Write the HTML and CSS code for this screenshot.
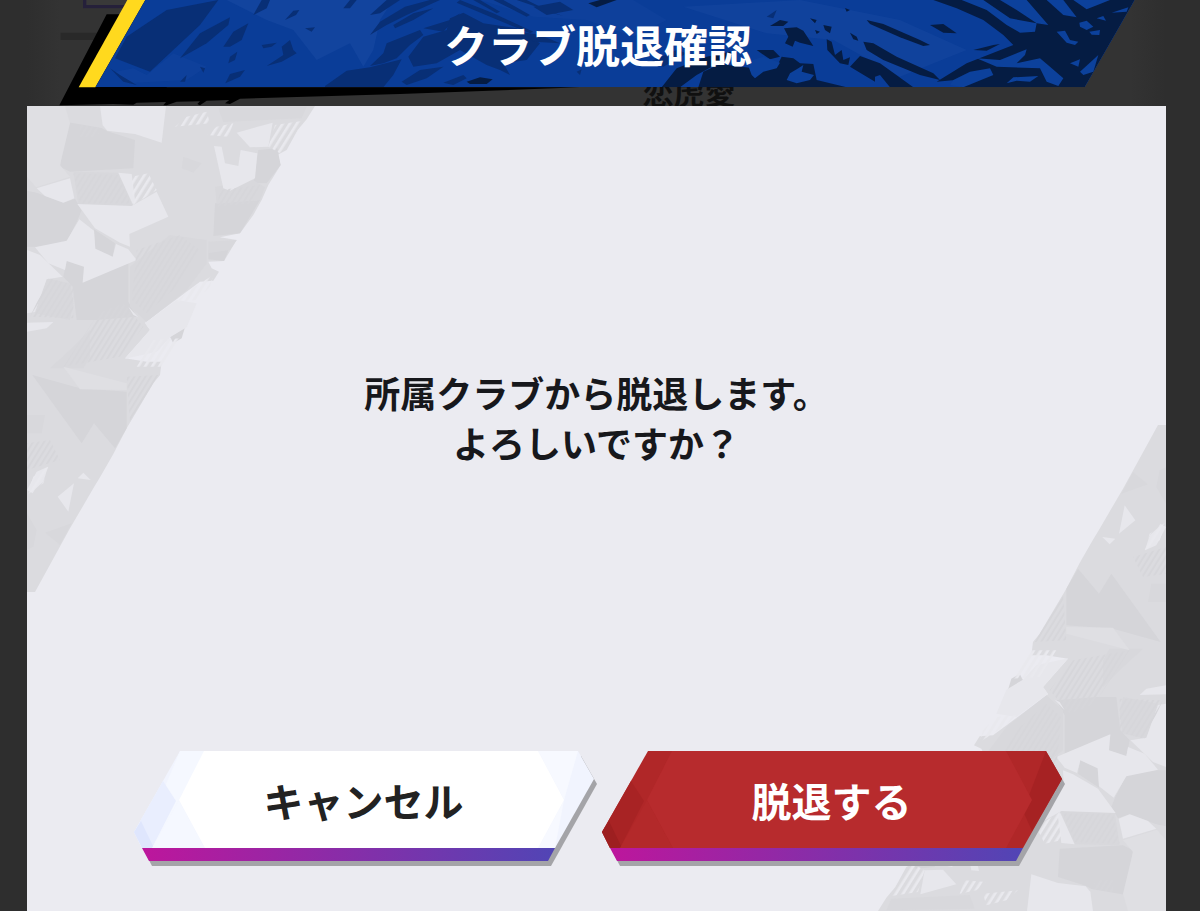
FILE: index.html
```html
<!DOCTYPE html>
<html lang="ja">
<head>
    <meta charset="UTF-8">
    <meta name="viewport" content="width=device-width, initial-scale=1.0">
    <title>クラブ脱退確認</title>
    <link rel="stylesheet" href="styles.css">
</head>
<body>
    <!-- Shared shapes -->
    <svg class="defs" aria-hidden="true">
        <defs>
            <linearGradient id="stripe" x1="0" x2="1" y1="0" y2="0">
                <stop offset="0" stop-color="#bd169c"/>
                <stop offset="1" stop-color="#5145b5"/>
            </linearGradient>
            <pattern id="scratch" width="18" height="40" patternUnits="userSpaceOnUse" patternTransform="rotate(32)">
                <rect width="8" height="40" fill="#e9e9ee"/>
            </pattern>
            <pattern id="scratch-dark" width="14" height="40" patternUnits="userSpaceOnUse" patternTransform="rotate(32)">
                <rect width="6" height="40" fill="#d6d6da"/>
            </pattern>
        </defs>
        <symbol id="shards" viewBox="21 18 870 1461">
            <path fill="#dbdbdf" d="M21 18H885L860 58 833 90 800 150 772 165 782 195 745 255 725 300 700 345 660 400 600 412 650 420 612 483 565 485 575 505 597 515 580 542 540 545 375 668 390 690 315 775 380 785H425L420 825 400 850 320 985 280 1062 240 1132 220 1165 150 1285 45 1476H21Z"/>
            <g fill="#d5d5d9">
                <path d="M140 66 245 84 262 94 345 120 340 205 150 215 120 200Z"/>
                <path d="M21 272 50 278 130 308 165 296 185 330 172 362 140 425 50 440H21Z"/>
                <path d="M222 388 285 430 278 472 226 446Z"/>
                <path d="M140 482 195 500 188 546 325 490 325 605 350 650 230 660H170L158 560 130 530Z"/>
                <path d="M585 310 720 300 660 400 580 408Z"/>
                <path d="M715 150 772 145 782 195 740 250 700 250Z"/>
                <path d="M565 450 630 440 612 483 565 478Z"/>
                <path d="M37 825 180 865 320 875 320 985 285 1045 222 970 185 1030Z"/>
                <path d="M450 710 495 682 485 715 460 730Z"/>
            </g>
            <g fill="#d8d8dc">
                <path d="M160 215 298 218 338 318 175 315Z"/>
                <path d="M450 405 560 420 560 490 500 570 380 665 330 620 330 500Z"/>
                <path d="M565 425 650 420 630 450 565 460Z"/>
                <path d="M80 535 150 550 160 610 150 660 45 640Z"/>
                <path d="M595 25 860 20 845 55 610 66Z"/>
                <path d="M490 170 545 190 520 218 485 205Z"/>
                <path d="M21 945H75L65 1000H21Z"/>
                <path d="M75 1298 155 1270 120 1335Z"/>
                <path d="M21 1240 50 1290 40 1340 21 1350Z"/>
                <path d="M150 750 210 690 210 770 190 805 90 805Z"/>
                <path d="M585 260 700 240 735 262 720 300 590 312Z"/>
            </g>
            <g fill="#dfdfe3">
                <path d="M21 18H135L150 70 120 195 150 230 48 262 21 230Z"/>
                <path d="M130 800 320 850 320 870 180 868Z"/>
            </g>
            <g fill="#e7e7ec">
                <path d="M240 18H438L425 128 345 102 262 92 248 76Z"/>
                <path d="M50 265 150 235 163 295 130 308 75 288Z"/>
                <path d="M295 218 335 222 345 300 338 312Z"/>
                <path d="M172 312 335 318 410 275 445 350 328 402 330 440 300 428 225 385Z"/>
                <path d="M45 442 140 422 178 358 222 392 226 446 278 470 288 432 325 448 350 480 188 548 192 500 140 483 135 510 85 490Z"/>
                <path d="M21 450 60 465 128 530 80 538 45 636 21 640Z"/>
                <path d="M582 138 605 140 615 190 655 198 662 150 712 160 705 235 630 272 610 265Z"/>
                <path d="M650 98 758 68 745 140 690 142Z"/>
                <path d="M325 620 355 652 340 645Z"/>
                <path d="M21 668 100 666 80 685 21 695Z"/>
                <path d="M375 670 470 600 530 610 500 682 450 712 410 755 315 776 390 690Z"/>
                <path d="M173 1135 190 1118 212 1140Z"/>
                <path d="M113 1190 162 1150 145 1235Z"/>
                <path d="M50 1115 84 1100 70 1145 45 1168 38 1180 21 1170Z"/>
            </g>
            <g fill="url(#scratch)">
                <path d="M335 230 385 220 410 270 340 315Z"/>
                <path d="M500 50 560 35 570 70 465 80Z"/>
                <path d="M590 80 640 70 625 110 560 105Z"/>
                <path d="M765 75 850 62 830 100 780 160 745 140Z"/>
                <path d="M500 575 580 525 570 560 530 600 470 605Z"/>
                <path d="M400 720 480 715 425 800 350 800Z"/>
                <path d="M40 1130 85 1100 70 1150 21 1185Z"/>
            </g>
            <g fill="url(#scratch-dark)">
                <path d="M160 220 295 225 330 310 180 310Z"/>
                <path d="M180 75 245 85 230 110 180 110Z"/>
                <path d="M350 450 480 405 540 450 470 560 380 640 335 600Z"/>
                <path d="M85 535 160 555 160 655 30 650Z"/>
                <path d="M235 640 310 610 370 680 300 770 130 800Z"/>
                <path d="M600 270 720 255 700 310 590 320Z"/>
                <path d="M320 830 415 825 330 970Z"/>
                <path d="M21 1030 90 1020 120 1080 21 1110Z"/>
            </g>
        </symbol>
    </svg>

    <header class="banner">
        <div class="behind">恋虎愛</div>
        <svg class="banner-art" viewBox="0 0 3600 318" preserveAspectRatio="xMidYMin slice" aria-hidden="true">
            <path fill="#292929" d="M182 98H320V120H182Z"/>
            <path fill="#393939" d="M250 0H400V25H250Z"/>
            <path fill="none" stroke="#25203a" stroke-width="10" d="M254-10V20H380"/>
            <path d="M320 43H365L390 0H500V262H1740L1200 282 720 296 690 312 675 310 688 300 620 302 600 316 592 312 600 304 530 305 500 316H490L498 306 410 308 400 314 340 312 178 316Z"/>
            <path fill="#ffd91e" d="M382 0H436L286 262H236Z"/>
            <clipPath id="plate"><path d="M436 0H3404L3254 262H286Z"/></clipPath>
            <g clip-path="url(#plate)">
                <path fill="#0a3d98" d="M280 0H3410V262H280Z"/>
                <g fill="#12449e">
                    <path d="M680 0H1180L1140 60 1120 150 1090 200 1050 130 950 180 880 90 800 60Z"/>
                    <path d="M1440 0H1900L2000 60 1900 110 1760 60 1600 50Z" opacity=".5"/>
                    <path d="M2050 20 2400 0 2700 60 2900 150 2700 230 2500 120 2300 100Z" opacity=".7"/>
                    <path d="M345 215 400 205 440 225 520 160 620 200 560 240 380 250Z" opacity=".5"/>
                </g>
                <g fill="#082f76">
                    <path d="M410 90 500 30 655 0 600 75 450 215 345 175 380 110Z"/>
                    <path d="M540 175 600 100 690 52 685 75 620 130Z"/>
                    <path d="M670 140 700 95 745 70 725 120 690 140Z"/>
                    <path d="M760 45 785 0H810L800 25Z"/>
                    <path d="M855 60 880 32 898 30 888 45Z"/>
                    <path d="M685 190 690 170 712 155 705 180Z"/>
                    <path d="M676 250 690 222 735 210 720 230Z"/>
                    <path d="M330 205 360 225 410 255 370 245Z"/>
                    <path d="M785 135 830 128 815 140 790 145Z"/>
                    <path d="M800 198 850 165 845 140 870 120 880 150 890 160 845 185Z"/>
                    <path d="M540 245 560 225 555 245Z"/>
                    <path d="M915 85 945 82 935 95Z"/>
                    <path d="M600 200 615 205 610 218Z"/>
                    <path d="M975 258 1040 212 1110 202 1205 178 1180 225 1150 262H975Z"/>
                    <path d="M1110 198 1150 160 1160 130 1260 90 1270 105 1230 135 1190 175 1150 190Z"/>
                    <path d="M1030 25 1050 0H1070L1050 25Z"/>
                    <path d="M1110 45 1160 0H1200L1140 40Z"/>
                    <path d="M1110 105 1140 65 1215 20 1290 0H1320L1220 45 1160 75Z"/>
                    <path d="M1180 75 1240 40 1300 25 1240 60 1185 85Z"/>
                    <path d="M1270 85 1350 60 1380 40 1330 95Z"/>
                    <path d="M1380 0 1480 40 1600 95 1590 100 1470 50 1370 8Z"/>
                    <path d="M1420 0H1440L1500 35 1490 40Z"/>
                    <path d="M1480 0H1510L1590 45 1580 50Z"/>
                    <path d="M1550 0H1580L1660 40 1690 48Z"/>
                    <path d="M1225 170 1270 110 1340 90 1350 55 1390 38 1450 70 1550 85 1620 130 1580 180 1510 190 1530 225 1500 210 1460 195 1380 150 1310 190 1240 200Z"/>
                    <path d="M1205 245 1260 210 1330 200 1280 235 1220 255Z"/>
                    <path d="M1330 248 1390 225 1400 235 1360 255Z"/>
                    <path d="M1600 20 1680 5 1720 30 1640 45Z"/>
                    <path d="M1560 95 1620 105 1680 130 1600 125Z"/>
                    <path d="M1950 185 2030 150 2060 160 1990 200Z"/>
                    <path d="M1730 215 1745 208 1740 225Z"/>
                    <path d="M2300 50 2330 30 2320 55Z"/>
                </g>
                <g fill="#051c43">
                    <path d="M1400 245 1440 232 1478 238 1460 252 1410 252Z"/>
                    <path d="M1765 10 1800 0H1850L1790 22Z"/>
                    <path d="M1985 262 2030 205 2120 170 2190 155 2200 165 2090 225 2040 262Z"/>
                    <path d="M2095 262 2110 215 2160 192 2260 205 2330 200 2345 170 2380 175 2400 190 2440 192 2450 240 2540 262Z"/>
                    <path d="M2270 150 2320 150 2340 170 2310 178Z"/>
                    <path d="M2352 85 2390 82 2410 92 2440 138 2400 128 2385 122 2378 140 2355 130 2365 110Z"/>
                    <path d="M2310 78 2340 60 2365 65 2350 78Z"/>
                    <path d="M2535 24 2550 30 2540 35ZM2430 55 2450 60 2445 70Z"/>
                    <path d="M2470 75 2495 80 2490 100 2475 90ZM2445 90 2460 95 2450 102Z"/>
                    <path d="M2480 118 2495 125 2505 165 2525 150 2530 180 2550 172 2545 195 2520 190 2482 150Z"/>
                    <path d="M2550 200 2580 168 2640 190 2740 262H2670L2640 225 2625 230 2625 245Z"/>
                    <path d="M2550 98 2570 110 2575 122 2560 118Z"/>
                    <path d="M2600 60 2650 72 2760 120 2790 135 2770 138 2700 112 2610 72Z"/>
                    <path d="M2590 125 2620 130 2690 170 2800 220 2820 240 2760 225 2650 180 2600 150Z"/>
                    <path d="M2790 75 2830 72 2870 100 2830 98Z"/>
                    <path d="M2920 150 2980 135 3000 132 2960 152Z"/>
                    <path d="M2800 0H3404L3254 262H2880L2920 235 2810 245 2900 190 3040 135 3010 105 2950 60 2870 25Z"/>
                </g>
                <g fill="#0c419c">
                    <path d="M2885 0H2950L3030 55 3110 70 3105 95 3060 98 3020 75 2960 30Z"/>
                    <path d="M3000 0H3080L3145 75 3110 70 3050 30Z"/>
                    <path d="M3140 0H3190L3230 52 3190 45Z"/>
                    <path d="M3220 0H3330L3300 12 3260 28Z"/>
                    <path d="M2930 175 3000 180 3080 148 3075 165 3050 190 3120 175 3150 200 3190 235 3175 258 3140 245 3120 205 2990 200Z"/>
                    <path d="M2860 240 2910 215 2970 205 2980 225 2890 262 2850 255Z"/>
                    <path d="M3020 250 3040 232 3115 228 3090 245 3050 242Z"/>
                    <path d="M3170 95 3195 92 3210 120 3235 125 3225 135 3200 128Z"/>
                    <path d="M3238 68 3260 62 3280 80 3260 90 3240 80Z"/>
                    <path d="M3268 95 3300 90 3298 105 3275 104Z"/>
                    <path d="M3290 55 3310 48 3318 62Z"/>
                    <path d="M3335 38 3385 22 3380 35Z"/>
                    <path d="M3210 190 3240 178 3235 200Z"/>
                    <path d="M3240 215 3295 165 3280 215 3250 225Z"/>
                    <path d="M2240 185 2290 170 2340 188 2330 205 2290 215 2265 235 2255 225Z"/>
                    <path d="M2360 240 2370 220 2395 205 2410 195 2405 215 2442 225 2430 240 2390 250Z"/>
                </g>
            </g>
        </svg>
        <h1>クラブ脱退確認</h1>
    </header>

    <main class="panel">
        <svg class="shards shards-top" aria-hidden="true"><use href="#shards"/></svg>
        <svg class="shards shards-bottom" aria-hidden="true"><use href="#shards"/></svg>

        <p class="message">所属クラブから脱退します。<br>よろしいですか？</p>

        <div class="actions">
            <button type="button" class="btn btn-cancel">
                <svg class="btn-art" viewBox="0 0 460 110" preserveAspectRatio="none" aria-hidden="true">
                    <path fill="#a4a4a8" d="M49 5H447L463 33 417 115H18L3 86Z"/>
                    <path fill="#f1f4fe" d="M46 0H444L460 28 421 97H8L0 81Z"/>
                    <path fill="#f5f8ff" d="M46 0H72L45 49 18 97H8L4 89 30 38Z"/>
                    <path fill="#e9eefe" d="M29 30 42 50 18 97H8L0 81Z"/>
                    <path fill="#dfe6fd" d="M7 70 20 97H8L0 81Z"/>
                    <path fill="#f5f8ff" d="M45 49 71 97H18Z"/>
                    <path fill="#f7f9ff" d="M404 0H444L430 49 421 97H404L430 49Z"/>
                    <path fill="#fff" d="M70 0H404L430 49 404 97H71L45 49Z"/>
                    <path fill="url(#stripe)" d="M8 97H421L414 110H15Z"/>
                </svg>
                <span>キャンセル</span>
            </button>
            <button type="button" class="btn btn-leave">
                <svg class="btn-art" viewBox="0 0 460 110" preserveAspectRatio="none" aria-hidden="true">
                    <path fill="#a4a4a8" d="M49 5H447L463 33 417 115H18L3 86Z"/>
                    <path fill="#b02728" d="M46 0H444L460 28 421 97H8L0 81Z"/>
                    <path fill="#a82324" d="M29 30 42 50 18 97H8L0 81Z"/>
                    <path fill="#9d1f20" d="M7 70 20 97H8L0 81Z"/>
                    <path fill="#b3292a" d="M45 49 71 97H18Z"/>
                    <path fill="#a62223" d="M444 0 460 28 430 80 421 60Z"/>
                    <path fill="#b72b2d" d="M70 0H404L430 49 404 97H71L45 49Z"/>
                    <path fill="url(#stripe)" d="M8 97H421L414 110H15Z"/>
                </svg>
                <span>脱退する</span>
            </button>
        </div>
    </main>
</body>
</html>
```

FILE: styles.css
```css
* {
    box-sizing: border-box;
}
body {
    margin: 0;
    min-height: 100vh;
    display: flex;
    flex-direction: column;
    background-color: #2e2e2e;
    font-family: "Noto Sans CJK JP", "Noto Sans", sans-serif;
    font-weight: bold;
}
.defs {
    position: absolute;
    width: 0;
    height: 0;
}

/* Title banner */
.banner {
    position: relative;
    height: 106px;
    padding: 0 32px 0 28px;
    overflow: hidden;
    background: linear-gradient(to right, #2e2e2e 27px, #333 60px, #333 calc(100% - 70px), #2e2e2e calc(100% - 34px));
}
.banner-art {
    position: absolute;
    inset: 0;
    width: 100%;
    height: 100%;
}
.behind {
    position: absolute;
    top: 71px;
    left: 0;
    right: 0;
    padding-left: 178px;
    text-align: center;
    font-size: 31px;
    line-height: 40px;
    color: #101010;
}
.banner h1 {
    position: relative;
    margin: 0;
    text-align: center;
    font-size: 44px;
    line-height: 88px;
    color: #fff;
}

/* Dialog panel */
.panel {
    position: relative;
    flex: 1;
    display: flex;
    flex-direction: column;
    margin: 0 34px 0 27px;
    overflow: hidden;
    background-color: #ebebf1;
}
.shards {
    position: absolute;
    width: 290px;
    height: 487px;
}
.shards-top {
    top: 0;
    left: 0;
}
.shards-bottom {
    right: 0;
    bottom: 0;
    transform: rotate(180deg);
}
.message {
    position: relative;
    flex: 1;
    display: flex;
    flex-direction: column;
    justify-content: center;
    margin: 0;
    padding: 0 16px 24px;
    text-align: center;
    font-size: 36px;
    line-height: 50px;
    color: #17181c;
}
.actions {
    position: relative;
    display: flex;
    justify-content: center;
    gap: 8px;
    padding: 0 14px 50px 16px;
}
.btn {
    position: relative;
    flex: 0 1 460px;
    height: 110px;
    padding: 0 0 12px;
    border: none;
    background: none;
    font: inherit;
    font-size: 40px;
    cursor: pointer;
}
.btn-art {
    position: absolute;
    inset: 0;
    width: 100%;
    height: 100%;
    overflow: visible;
}
.btn span {
    position: relative;
}
.btn-cancel {
    color: #222;
}
.btn-leave {
    color: #fff;
}
.btn:hover {
    filter: brightness(1.05);
}
```
